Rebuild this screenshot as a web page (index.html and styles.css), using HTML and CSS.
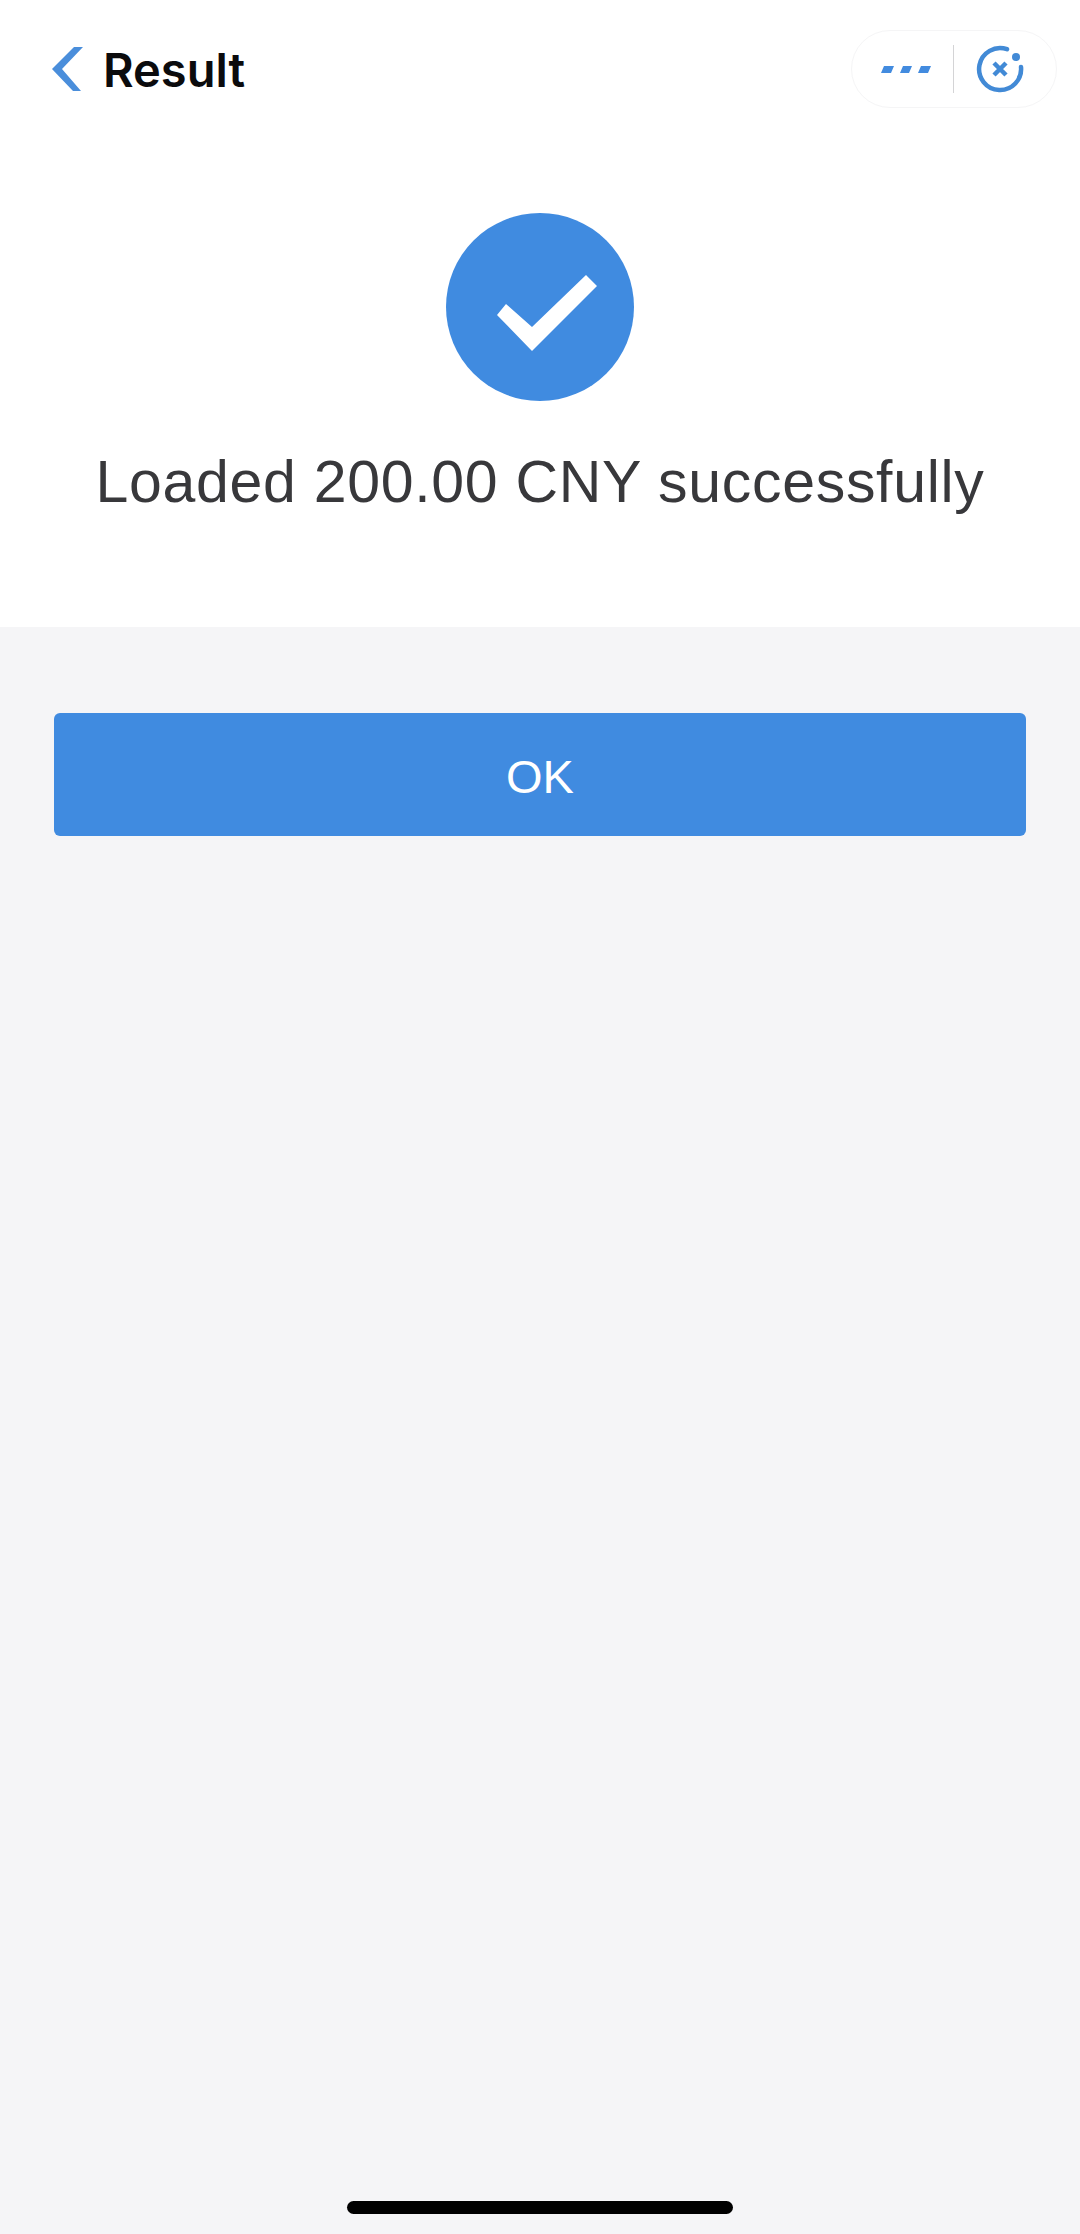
FILE: index.html
```html
<!DOCTYPE html>
<html lang="en">
  <head>
    <meta charset="UTF-8" />
    <meta name="viewport" content="width=device-width, initial-scale=1.0" />
    <title>Result</title>
    <link rel="stylesheet" href="styles.css">
  </head>
  <body>
    <main class="page">
      <section class="result-area">
        <header class="top-bar">
          <div class="top-title">
            <svg class="icon-back" width="32" height="44" viewBox="0 0 32 44">
              <path d="M22 0H31L10 22L29 44H21L0 22Z" fill="#4a8edb" />
            </svg>
            <h1>Result</h1>
          </div>
          <div class="capsule">
            <svg class="icon-more" width="50" height="7" viewBox="0 0 50 7">
              <path d="M3 0H13L10 7H0ZM22 0H31L28 7H19ZM40 0H50L47 7H37Z" fill="#428bdf" />
            </svg>
            <span class="capsule-line"></span>
            <svg class="icon-close" width="50" height="50" viewBox="0 0 50 50">
              <path d="M32 5.2A21 21 0 1 0 46 23" fill="none" stroke="#428ad6" stroke-width="4.5" stroke-linecap="round" />
              <circle cx="41" cy="13" r="4" fill="#428ad6" />
              <path d="M19 19L31 31M31 19L19 31" fill="none" stroke="#428ad6" stroke-width="4.5" />
            </svg>
          </div>
        </header>
        <svg class="icon-success" width="188" height="188" viewBox="0 0 188 188">
          <circle cx="94" cy="94" r="94" fill="#408be0" />
          <path d="M51 102L60 91L86 114L140 62L151 73L86 138Z" fill="#fff" />
        </svg>
        <p class="result-text">Loaded 200.00 CNY successfully</p>
      </section>
      <section class="action-area">
        <button class="btn-ok">OK</button>
      </section>
      <span class="home-bar"></span>
    </main>
  </body>
</html>
```

FILE: styles.css
```css
* {
  margin: 0;
  padding: 0;
  box-sizing: border-box;
  border: none;
  outline: none;
}
body {
  background-color: #f5f5f7;
  font-family: "Liberation Sans", sans-serif;
}
.page {
  display: flex;
  flex-direction: column;
  height: 2234px;
}
.result-area {
  display: flex;
  flex-direction: column;
  align-items: center;
  height: 627px;
  background-color: #fff;
}
.top-bar {
  display: flex;
  justify-content: space-between;
  align-items: center;
  width: 100%;
  height: 78px;
  margin: 30px 0 105px;
  padding: 0 23px 0 52px;
}
.top-title {
  display: flex;
  align-items: center;
  gap: 19px;
}
.top-title h1 {
  font-family: Inter, "Liberation Sans", sans-serif;
  font-size: 47px;
  font-weight: 600;
  color: #0b0b0d;
}
.capsule {
  display: flex;
  align-items: center;
  width: 206px;
  height: 78px;
  padding-left: 29px;
  border: 1px solid #f5f5f6;
  border-radius: 39px;
}
.capsule-line {
  width: 1px;
  height: 48px;
  margin: 0 21px 0 22px;
  background-color: #d4d4d6;
}
.result-text {
  margin-top: 47px;
  font-size: 59px;
  line-height: 68px;
  letter-spacing: 0.7px;
  color: #38383b;
}
.action-area {
  padding: 86px 54px 0;
}
.btn-ok {
  display: block;
  width: 100%;
  height: 123px;
  padding-top: 3px;
  background-color: #408be0;
  border-radius: 6px;
  font-family: inherit;
  font-size: 47px;
  color: #fff;
  cursor: pointer;
}
.home-bar {
  width: 386px;
  height: 13px;
  margin: auto auto 20px;
  background-color: #000;
  border-radius: 7px;
}
```
